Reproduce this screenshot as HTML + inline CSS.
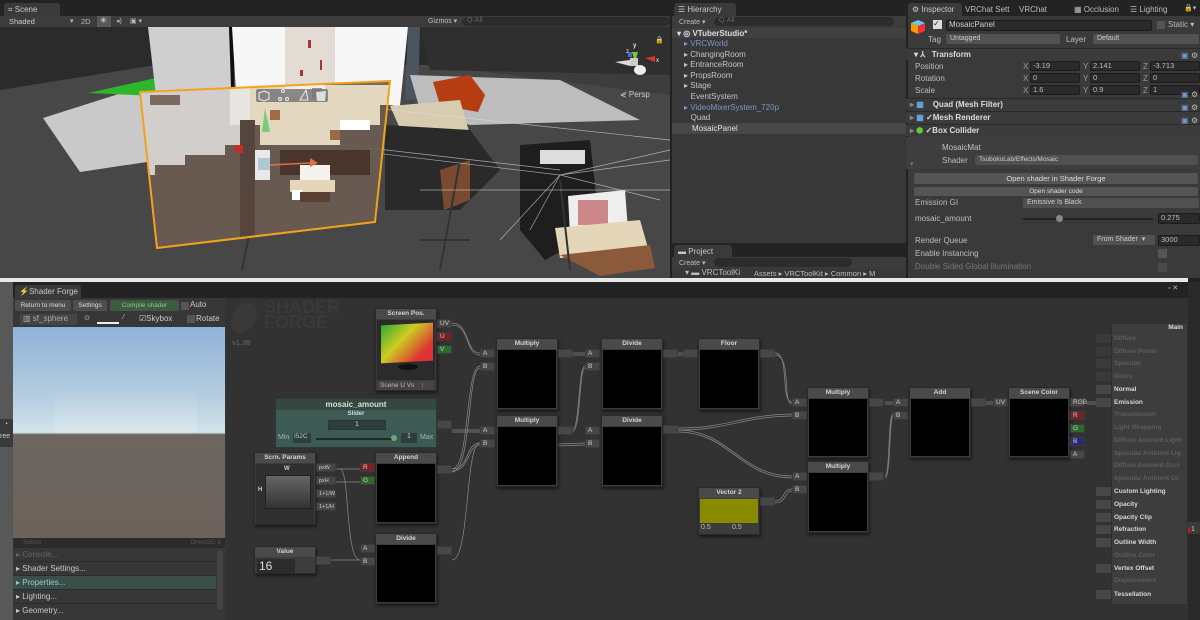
<!DOCTYPE html>
<html><head><meta charset="utf-8">
<style>
*{margin:0;padding:0;box-sizing:border-box}
body{width:1200px;height:620px;overflow:hidden;background:#222;font-family:"Liberation Sans",sans-serif;font-size:8px;color:#bdbdbd;position:relative}
.a{position:absolute;white-space:nowrap}
.tab{position:absolute;background:#3a3a3a;border-radius:3px 3px 0 0;color:#c8c8c8;font-size:8px;padding:2px 4px;height:13px;white-space:nowrap;overflow:hidden}
.fld{position:absolute;background:#2a2a2a;border:1px solid #1c1c1c;border-radius:2px;color:#bbb;font-size:7.5px;padding-left:2px;height:10px;line-height:8px}
.drop{position:absolute;background:#515151;border-radius:2px;color:#ccc;font-size:7px;padding-left:4px;height:10px;line-height:10px}
.btn{position:absolute;background:#555;border-radius:2px;color:#ddd;font-size:7.5px;text-align:center;height:11px;line-height:11px}
.hdr{position:absolute;left:906px;width:294px;height:12px;background:#3b3b3b;border-top:1px solid #2a2a2a;font-weight:bold;color:#ddd;font-size:8px;line-height:11px}
.node{position:absolute;background:#3c3c3c;border:1px solid #2a2a2a;box-shadow:1px 2px 3px rgba(0,0,0,.5)}
.node .h{height:10px;background:#4a4a4a;text-align:center;font-weight:bold;font-size:6.5px;line-height:10px;color:#d4d4d4}
.node .b{background:#000;position:absolute;left:1px;right:1px;bottom:1px}
.p{position:absolute;width:15px;height:9px;background:#474747;border:1px solid #3a3a3a;font-size:6.5px;color:#ccc;line-height:8px;padding-left:2px}
.o{position:absolute;width:15px;height:9px;background:#474747;border:1px solid #3a3a3a}
.ml{position:absolute;left:1114px;font-size:6.5px;font-weight:bold;color:#d8d8d8}
.ml.d{color:#5d5d5d}
.ms{position:absolute;left:1096px;width:15px;height:9px;background:#474747}
</style></head><body>

<!-- ===== SCENE ===== -->
<div class="a" style="left:0;top:0;width:670px;height:27px;background:#232323"></div>
<div class="tab" style="left:4px;top:3px;width:56px;">⌗ Scene</div>
<div class="a" style="left:0;top:16px;width:670px;height:11px;background:#3c3c3c"></div>
<div class="a" style="left:9px;top:17px;color:#ccc;font-size:7.5px">Shaded</div>
<div class="a" style="left:70px;top:17px;font-size:7px">▾</div>
<div class="a" style="left:81px;top:17px;font-size:7.5px">2D</div>
<div class="a" style="left:97px;top:16px;width:14px;height:11px;background:#5a5a5a"></div>
<div class="a" style="left:100px;top:16px;font-size:8px;color:#eee">✳</div>
<div class="a" style="left:116px;top:17px;font-size:7px">◂)</div>
<div class="a" style="left:130px;top:17px;font-size:7px">▣ ▾</div>
<div class="a" style="left:428px;top:17px;font-size:7px">Gizmos ▾</div>
<div class="a" style="left:462px;top:17px;width:208px;height:9px;background:#2c2c2c;border-radius:5px;color:#666;font-size:7px;padding-left:5px">Q·All</div>

<svg class="a" style="left:0;top:27px" width="670" height="251" viewBox="0 27 670 251">
<defs><clipPath id="mz"><polygon points="140,92 390,81 375,222 157,248"/></clipPath></defs>
<rect x="0" y="27" width="670" height="251" fill="#3d3d3d"/>
<polygon points="0,27 670,27 670,65 430,65 0,90" fill="#2b2b2b"/>
<polygon points="0,90 150,66 430,65 670,95 670,278 0,278" fill="#474747"/>
<g stroke="#4f4f4f" stroke-width="0.5">
<line x1="0" y1="130" x2="670" y2="120"/><line x1="0" y1="170" x2="670" y2="160"/><line x1="0" y1="215" x2="670" y2="205"/><line x1="0" y1="105" x2="670" y2="100"/>
<line x1="60" y1="90" x2="0" y2="278"/><line x1="150" y1="80" x2="110" y2="278"/>
</g>
<polygon points="43,118 150,84 160,160 80,172" fill="#c9c9c9"/>
<polygon points="88,93 156,78 156,96" fill="#2db52d"/>
<polygon points="148,27 229,27 232,87 156,96" fill="#cfcfcf"/>
<polygon points="229,27 234,27 234,88 231,88" fill="#111"/>
<polygon points="232,27 408,27 400,106 236,92" fill="#f7f7f7"/>
<rect x="285" y="27" width="50" height="60" fill="#e2dcd4"/>
<g fill="#a33"><rect x="308" y="40" width="3" height="8"/><rect x="320" y="60" width="2" height="10"/><rect x="300" y="70" width="3" height="6"/></g>
<polygon points="408,27 420,27 418,100 405,100" fill="#4a5560"/>
<polygon points="420,27 670,27 670,75 430,70" fill="#2f2f2f"/>
<polygon points="410,75 560,80 640,120 470,125 420,110" fill="#bdbdbd"/>
<polygon points="433,82 470,75 485,95 478,112 440,105" fill="#b63c12"/>
<polygon points="390,106 460,100 470,135 405,140" fill="#d8ccb0"/>
<polygon points="385,125 470,130 500,170 460,210 385,210" fill="#2a2a2a"/>
<polygon points="520,145 590,140 600,230 545,260 520,230" fill="#1e1e1e"/>
<polygon points="568,196 625,190 628,230 570,235" fill="#eee"/>
<rect x="578" y="200" width="30" height="25" fill="#c88"/>
<polygon points="555,228 640,220 648,248 560,258" fill="#e4d6b8"/>
<polygon points="560,255 650,245 655,268 600,276" fill="#8a5a3a"/>
<polygon points="440,170 470,160 470,200 444,210" fill="#7a4a30"/>
<rect x="540" y="150" width="45" height="14" fill="#ddd"/>
<g stroke="#333" stroke-width="2"><line x1="460" y1="160" x2="440" y2="270"/><line x1="420" y1="240" x2="470" y2="240"/><line x1="560" y1="180" x2="570" y2="270"/><line x1="250" y1="230" x2="242" y2="270"/></g>
<g stroke="#ddd" stroke-width="0.7" opacity="0.7">
<line x1="300" y1="100" x2="670" y2="140"/><line x1="300" y1="140" x2="560" y2="170"/><line x1="350" y1="150" x2="560" y2="175"/><line x1="560" y1="175" x2="670" y2="150"/><line x1="560" y1="175" x2="670" y2="160"/><line x1="560" y1="175" x2="660" y2="200"/><line x1="560" y1="175" x2="500" y2="240"/><line x1="560" y1="175" x2="530" y2="230"/><line x1="420" y1="190" x2="670" y2="190"/>
</g>
<g clip-path="url(#mz)">
<rect x="130" y="75" width="270" height="180" fill="#6d5c52" opacity="0.92"/>
<path d="M140 85h100v60h-15v10h-40v10h-30v10h-15z" fill="#d2cecb"/>
<path d="M150 95h30v10h-30z" fill="#7a6a60"/>
<path d="M230 85h20v40h-20z" fill="#e8e4e0"/>
<path d="M250 85h140v20h-10v20h-40v20h-80v-20h-10z" fill="#e4d7bf"/>
<rect x="285" y="85" width="40" height="12" fill="#f3efe8"/>
<rect x="312" y="88" width="10" height="10" fill="#9a8fa8"/>
<rect x="270" y="110" width="10" height="10" fill="#a06a45"/>
<rect x="330" y="130" width="10" height="10" fill="#9a6a45"/>
<rect x="340" y="120" width="30" height="10" fill="#fff"/>
<rect x="280" y="150" width="90" height="25" fill="#4a352c"/>
<rect x="300" y="165" width="30" height="15" fill="#f6f2ee"/>
<rect x="290" y="180" width="45" height="12" fill="#e5d6b8"/>
<rect x="292" y="190" width="10" height="10" fill="#fff"/>
<rect x="300" y="192" width="30" height="10" fill="#5a4033"/>
<rect x="240" y="150" width="30" height="30" fill="#e8e8e8"/>
<rect x="240" y="120" width="15" height="130" fill="#55453d"/>
</g>
<polygon points="140,92 390,81 375,222 157,248" fill="none" stroke="#f3a21b" stroke-width="2"/>
<rect x="235" y="145" width="8" height="8" fill="#c82a2a"/>
<polygon points="265,108 270,132 262,132" fill="#7c7"/>
<line x1="270" y1="165" x2="310" y2="163" stroke="#e07040" stroke-width="1.5"/>
<polygon points="310,158 318,163 310,167" fill="#e07040"/>
<rect x="258" y="158" width="12" height="12" fill="#9bc" opacity="0.7"/>
<rect x="256" y="89" width="72" height="13" rx="2" fill="#777" opacity="0.85"/>
<g fill="none" stroke="#eee" stroke-width="1"><polygon points="264,91 269,93 269,99 264,101 259,99 259,93"/><circle cx="283" cy="91" r="1.5"/><circle cx="280" cy="99" r="1.5"/><circle cx="287" cy="99" r="1.5"/></g>
<polygon points="300,100 306,90 308,100" fill="none" stroke="#eee"/>
<polygon points="316,92 326,91 325,101 317,101" fill="#ddd"/>
<polygon points="632,52 638,52 635,62" fill="#7c3"/><polygon points="645,58 655,56 655,62" fill="#d33"/><polygon points="615,62 630,60 630,66" fill="#ddd"/><rect x="630" y="58" width="8" height="8" fill="#ccc"/><rect x="628" y="52" width="4" height="5" fill="#46c"/>
<ellipse cx="640" cy="70" rx="6" ry="5" fill="#eee"/>
<text x="633" y="47" fill="#eee" font-size="6" font-weight="bold">y</text><text x="626" y="53" fill="#eee" font-size="6">z</text><text x="656" y="62" fill="#eee" font-size="6">x</text>
<text x="620" y="97" fill="#ccc" font-size="8">⋞ Persp</text>
<text x="655" y="42" fill="#aaa" font-size="7">🔒</text>
</svg>
<div class="a" style="left:0;top:278px;width:1188px;height:4px;background:#e8e8e8"></div>

<!-- ===== HIERARCHY ===== -->
<div class="a" style="left:670px;top:0;width:236px;height:278px;background:#383838;border-left:2px solid #222"></div>
<div class="a" style="left:672px;top:0;width:234px;height:16px;background:#232323"></div>
<div class="tab" style="left:674px;top:3px;width:62px;">☰ Hierarchy</div>
<div class="a" style="left:672px;top:16px;width:234px;height:11px;background:#3c3c3c"></div>
<div class="a" style="left:679px;top:18px;font-size:7px">Create ▾</div>
<div class="a" style="left:714px;top:17px;width:180px;height:9px;background:#2c2c2c;border-radius:5px;color:#666;font-size:7px;padding-left:5px">Q·All</div>
<div class="a" style="left:672px;top:28px;width:234px;height:10px;background:#414141"></div>
<div class="a" style="left:677px;top:29px;font-size:8px;font-weight:bold;color:#ddd">▾ ◎ VTuberStudio*</div>
<div class="a" style="left:684px;top:39px;font-size:8px;line-height:10.6px;color:#c4c4c4">
<span style="color:#7f97c9">▸ VRCWorld</span><br>▸ ChangingRoom<br>▸ EntranceRoom<br>▸ PropsRoom<br>▸ Stage<br>&nbsp;&nbsp;&nbsp;EventSystem<br><span style="color:#7f97c9">▸ VideoMixerSystem_720p</span><br>&nbsp;&nbsp;&nbsp;Quad</div>
<div class="a" style="left:672px;top:123px;width:234px;height:11px;background:#474747"></div>
<div class="a" style="left:692px;top:124px;font-size:8px;color:#e0e0e0">MosaicPanel</div>
<div class="a" style="left:672px;top:243px;width:234px;height:14px;background:#232323"></div>
<div class="tab" style="left:674px;top:245px;width:58px;">▬ Project</div>
<div class="a" style="left:672px;top:257px;width:234px;height:11px;background:#3c3c3c"></div>
<div class="a" style="left:679px;top:259px;font-size:7px">Create ▾</div>
<div class="a" style="left:714px;top:258px;width:138px;height:9px;background:#2c2c2c;border-radius:5px"></div>
<div class="a" style="left:685px;top:268px;font-size:8px">▾ ▬ VRCToolKi</div>
<div class="a" style="left:754px;top:269px;font-size:7.5px">Assets ▸ VRCToolKit ▸ Common ▸ M</div>

<!-- ===== INSPECTOR ===== -->
<div class="a" style="left:906px;top:0;width:294px;height:278px;background:#3a3a3a;border-left:2px solid #222"></div>
<div class="a" style="left:906px;top:0;width:294px;height:16px;background:#232323"></div>
<div class="tab" style="left:908px;top:3px;width:54px;background:#3a3a3a">⚙ Inspector</div>
<div class="a" style="left:965px;top:5px;font-size:8px">VRChat Sett</div>
<div class="a" style="left:1019px;top:5px;font-size:8px">VRChat</div>
<div class="a" style="left:1074px;top:5px;font-size:8px">▦ Occlusion</div>
<div class="a" style="left:1130px;top:5px;font-size:8px">☰ Lighting</div>
<div class="a" style="left:1184px;top:4px;font-size:7px">🔒▾</div>
<svg class="a" style="left:909px;top:18px" width="18" height="18"><polygon points="2,5 9,2 16,5 9,8" fill="#6ce"/><polygon points="2,5 9,8 9,16 2,13" fill="#f90"/><polygon points="16,5 9,8 9,16 16,13" fill="#e33"/></svg>
<div class="a" style="left:933px;top:20px;width:9px;height:9px;background:#ddd;color:#222;font-size:8px;line-height:8px">✓</div>
<div class="fld" style="left:946px;top:20px;width:206px;height:11px;color:#ccc;font-size:8px">MosaicPanel</div>
<div class="a" style="left:1157px;top:21px;width:8px;height:8px;background:#555"></div>
<div class="a" style="left:1168px;top:20px;font-size:8px">Static ▾</div>
<div class="a" style="left:928px;top:35px;font-size:8px">Tag</div>
<div class="drop" style="left:946px;top:34px;width:114px">Untagged</div>
<div class="a" style="left:1066px;top:35px;font-size:8px">Layer</div>
<div class="drop" style="left:1093px;top:34px;width:106px">Default</div>
<div class="hdr" style="top:48px;padding-left:8px">▾ ⅄ &nbsp;&nbsp;Transform</div>
<div class="a" style="left:915px;top:61px;font-size:8px;line-height:12px">Position<br>Rotation<br>Scale</div>
<div class="a" style="left:1023px;top:61px;font-size:8px;line-height:12px;color:#999">X<br>X<br>X</div>
<div class="a" style="left:1083px;top:61px;font-size:8px;line-height:12px;color:#999">Y<br>Y<br>Y</div>
<div class="a" style="left:1143px;top:61px;font-size:8px;line-height:12px;color:#999">Z<br>Z<br>Z</div>
<div class="fld" style="left:1030px;top:61px;width:50px">-3.19</div><div class="fld" style="left:1090px;top:61px;width:50px">2.141</div><div class="fld" style="left:1150px;top:61px;width:50px">-3.713</div>
<div class="fld" style="left:1030px;top:73px;width:50px">0</div><div class="fld" style="left:1090px;top:73px;width:50px">0</div><div class="fld" style="left:1150px;top:73px;width:50px">0</div>
<div class="fld" style="left:1030px;top:85px;width:50px">1.6</div><div class="fld" style="left:1090px;top:85px;width:50px">0.9</div><div class="fld" style="left:1150px;top:85px;width:50px">1</div>
<div class="hdr" style="top:98px;padding-left:4px"><span style="color:#888">▸</span> <span style="color:#6ad">▦</span> &nbsp;&nbsp;&nbsp;Quad (Mesh Filter)</div>
<div class="hdr" style="top:111px;padding-left:4px"><span style="color:#888">▸</span> <span style="color:#6ad">▦</span> ✓Mesh Renderer</div>
<div class="hdr" style="top:124px;padding-left:4px"><span style="color:#888">▸</span> <span style="color:#6c3">⬢</span> ✓Box Collider</div>
<div class="a" style="left:1181px;top:49px;font-size:8px;color:#79c;line-height:13px">▣<br><br><br>▣<br>▣<br>▣<br><br>▣</div>
<div class="a" style="left:1191px;top:49px;font-size:8px;color:#bbb;line-height:13px">⚙<br><br><br>⚙<br>⚙<br>⚙<br><br>⚙</div>
<div class="a" style="left:906px;top:137px;width:294px;height:32px;background:#3e3e3e"></div>
<div class="a" style="left:942px;top:143px;font-size:8px;color:#c4c4c4">MosaicMat</div>
<div class="a" style="left:942px;top:156px;font-size:8px">Shader</div>
<div class="a" style="left:910px;top:160px;font-size:7px;color:#777">▾</div>
<div class="drop" style="left:975px;top:155px;width:223px;font-size:6.5px">TsubokuLab/Effects/Mosaic</div>
<div class="btn" style="left:914px;top:173px;width:284px;">Open shader in Shader Forge</div>
<div class="btn" style="left:914px;top:187px;width:284px;height:9px;line-height:9px;font-size:6.5px">Open shader code</div>
<div class="a" style="left:915px;top:198px;font-size:8px">Emission GI</div>
<div class="drop" style="left:1023px;top:198px;width:176px">Emissive Is Black</div>
<div class="a" style="left:915px;top:214px;font-size:8px">mosaic_amount</div>
<div class="a" style="left:1023px;top:218px;width:130px;height:2px;background:#222"></div>
<div class="a" style="left:1056px;top:215px;width:7px;height:7px;border-radius:4px;background:#888"></div>
<div class="fld" style="left:1158px;top:213px;width:42px;height:11px">0.275</div>
<div class="a" style="left:915px;top:236px;font-size:8px">Render Queue</div>
<div class="drop" style="left:1093px;top:235px;width:62px">From Shader &nbsp;▾</div>
<div class="fld" style="left:1158px;top:235px;width:42px;height:11px">3000</div>
<div class="a" style="left:915px;top:249px;font-size:8px">Enable Instancing</div>
<div class="a" style="left:1158px;top:249px;width:9px;height:9px;background:#555"></div>
<div class="a" style="left:915px;top:262px;font-size:8px;color:#777">Double Sided Global Illumination</div>
<div class="a" style="left:1158px;top:263px;width:9px;height:9px;background:#4a4a4a"></div>

<!-- ===== SHADER FORGE ===== -->
<div class="a" style="left:0;top:282px;width:13px;height:338px;background:#585858"></div>
<div class="a" style="left:0;top:419px;width:13px;height:28px;background:#3a3a3a;color:#ccc;font-size:7px;line-height:12px">&nbsp;&nbsp;◔<br>ree</div>
<div class="a" style="left:1188px;top:282px;width:12px;height:338px;background:#2a2a2a"></div>
<div class="a" style="left:1188px;top:522px;width:12px;height:12px;background:#3a3a3a"></div>
<div class="a" style="left:1185px;top:527px;width:5px;height:7px;background:#d11;border-radius:3px"></div>
<div class="a" style="left:1191px;top:526px;font-size:7px;color:#ccc">1</div>
<div class="a" style="left:13px;top:282px;width:1175px;height:338px;background:#323232"></div>
<div class="a" style="left:13px;top:282px;width:1175px;height:16px;background:#232323"></div>
<div class="tab" style="left:15px;top:285px;width:66px;background:#3a3a3a">⚡Shader Forge</div>
<div class="a" style="left:1168px;top:284px;font-size:7px;color:#bbb">▫ ✕</div>
<div class="a" style="left:13px;top:298px;width:213px;height:322px;background:#373737"></div>
<div class="btn" style="left:15px;top:300px;width:56px;height:11px;font-size:6.5px;background:#4e4e4e">Return to menu</div>
<div class="btn" style="left:73px;top:300px;width:34px;height:11px;font-size:6.5px;background:#4e4e4e">Settings</div>
<div class="btn" style="left:110px;top:300px;width:69px;height:11px;font-size:6.5px;background:#3f5a3f;color:#8c8">Compile shader</div>
<div class="a" style="left:181px;top:302px;width:8px;height:8px;background:#555"></div>
<div class="a" style="left:190px;top:300px;font-size:8px;color:#ccc">Auto</div>
<div class="a" style="left:20px;top:314px;width:57px;height:11px;background:#454545;color:#aaa;font-size:8px;padding-left:3px">▥ sf_sphere</div>
<div class="a" style="left:84px;top:314px;font-size:7px">⊙</div>
<div class="a" style="left:97px;top:322px;width:22px;height:2px;background:#eee"></div>
<div class="a" style="left:123px;top:314px;font-size:7px;color:#ccc">⁄</div>
<div class="a" style="left:139px;top:314px;font-size:8px;color:#ccc">☑Skybox</div>
<div class="a" style="left:187px;top:315px;width:8px;height:8px;background:#555"></div>
<div class="a" style="left:196px;top:314px;font-size:8px;color:#ccc">Rotate</div>
<div class="a" style="left:13px;top:327px;width:212px;height:211px;background:linear-gradient(#8fb2d7 0%,#b7cfe0 35%,#d4e4ea 50%,#6d655f 51%,#6b625c 100%)"></div>
<div class="a" style="left:55px;top:392px;width:142px;height:41px;background:linear-gradient(rgba(255,255,255,.05),rgba(255,255,255,.18))"></div>
<div class="a" style="left:13px;top:538px;width:212px;height:10px;background:#2b2b2b;color:#555;font-size:6.5px;line-height:10px;padding-left:10px">Select<span style="position:absolute;right:4px">Direct3D 9</span></div>
<div class="a" style="left:13px;top:548px;width:203px;height:72px;font-size:8px;line-height:14px;color:#c8c8c8">
<div style="height:14px;border-bottom:1px solid #2b2b2b;color:#666;padding-left:3px">▸ Console...</div>
<div style="height:14px;border-bottom:1px solid #2b2b2b;padding-left:3px">▸ Shader Settings...</div>
<div style="height:14px;border-bottom:1px solid #2b2b2b;background:#3b4f4a;color:#9cc;padding-left:3px">▸ Properties...</div>
<div style="height:14px;border-bottom:1px solid #2b2b2b;padding-left:3px">▸ Lighting...</div>
<div style="height:14px;padding-left:3px">▸ Geometry...</div></div>
<div class="a" style="left:217px;top:550px;width:6px;height:60px;background:#444;border-radius:3px"></div>

<div class="a" style="left:232px;top:303px;width:24px;height:30px;background:#393939;border-radius:12px;transform:skew(-15deg)"></div>
<div class="a" style="left:264px;top:300px;font-size:18px;font-weight:bold;color:#393939;line-height:15px">SHADER<br>FORGE</div>
<div class="a" style="left:232px;top:338px;font-size:7.5px;color:#6a6a6a">v1.38</div>

<svg class="a" style="left:0;top:0" width="1200" height="620">
<g fill="none" stroke="#8a8a8a" stroke-width="0.7">
<path d="M452 323 C470 323 465 353 480 353"/><path d="M452 325 C470 325 465 355 480 355"/>
<path d="M316 469 C340 469 340 469 360 469"/><path d="M316 482 C345 482 345 482 360 482"/>
<path d="M340 469 C350 469 345 560 360 560"/><path d="M316 560 C335 560 340 560 360 560"/>
<path d="M452 469 C470 469 465 366 480 366"/><path d="M452 472 C472 472 467 368 480 368"/>
<path d="M452 430 C470 430 465 430 480 430"/><path d="M452 432 C470 432 465 432 480 432"/>
<path d="M452 469 C470 469 465 443 480 443"/><path d="M452 471 C470 471 467 445 480 445"/>
<path d="M452 560 C470 560 465 443 480 443"/>
<path d="M572 353 L585 353"/><path d="M572 355 L585 355"/>
<path d="M572 430 C580 430 578 366 585 366"/><path d="M572 432 C581 432 579 368 585 368"/>
<path d="M558 444 L585 443"/><path d="M558 446 L585 445"/>
<path d="M677 353 L683 353"/><path d="M677 355 L683 355"/>
<path d="M775 353 C790 353 780 402 792 402"/><path d="M775 355 C792 355 782 404 792 404"/>
<path d="M677 428 C730 428 740 415 792 414"/><path d="M677 430 C730 430 740 417 792 416"/>
<path d="M677 430 C730 430 740 476 792 476"/><path d="M677 432 C730 432 740 478 792 478"/>
<path d="M775 501 C785 501 782 489 792 489"/><path d="M775 503 C787 503 784 491 792 491"/>
<path d="M885 402 L893 402"/><path d="M885 404 L893 404"/>
<path d="M885 476 C890 476 888 414 893 414"/><path d="M885 478 C891 478 889 416 893 416"/>
<path d="M986 402 L993 402"/><path d="M986 404 L993 404"/>
<path d="M1087 402 L1096 402"/><path d="M1087 404 L1096 404"/>
</g></svg>

<div class="node" style="left:375px;top:308px;width:62px;height:83px"><div class="h">Screen Pos.</div>
<div class="a" style="left:1px;top:11px;width:58px;height:60px;background:#2b2b2b"></div>
<div class="a" style="left:5px;top:15px;width:52px;height:38px;background:linear-gradient(135deg,#3a3 0%,#cc2 40%,#d33 80%);transform:skewY(-3deg)"></div>
<div class="a" style="left:22px;top:55px;width:20px;height:6px;background:#111;border-radius:50%"></div>
<div class="a" style="left:2px;top:72px;width:56px;height:9px;background:#444;font-size:6.5px;color:#bbb;padding-left:2px">Scene U Vs &nbsp;&nbsp;&nbsp;⁝</div></div>
<div class="p" style="left:437px;top:319px">UV</div>
<div class="p" style="left:437px;top:332px;background:#7a2222">U</div>
<div class="p" style="left:437px;top:345px;background:#2a6a2a">V</div>

<div class="a" style="left:275px;top:398px;width:162px;height:50px;background:#3d5a53;border:1px solid #2a3a36">
<div style="height:11px;background:#34483f;text-align:center;font-weight:bold;font-size:8px;color:#ddd;line-height:11px">mosaic_amount</div>
<div style="text-align:center;font-size:6px;font-weight:bold;color:#cde;margin-top:1px">Slider</div>
<div class="a" style="left:52px;top:21px;width:58px;height:10px;background:#2e3f3b;border:1px solid #283531;text-align:center;font-size:7px;color:#ccc">1</div>
<div class="a" style="left:2px;top:35px;font-size:7px;color:#9bb">Min</div>
<div class="a" style="left:17px;top:34px;width:18px;height:10px;background:#2e3f3b;font-size:6.5px;color:#bcc;padding-left:1px">I52C</div>
<div class="a" style="left:40px;top:39px;width:78px;height:2px;background:#1d2a27"></div>
<div class="a" style="left:115px;top:36px;width:6px;height:6px;border-radius:3px;background:#6a7"></div>
<div class="a" style="left:125px;top:34px;width:16px;height:10px;background:#2e3f3b;font-size:7px;color:#ccc;text-align:center">1</div>
<div class="a" style="left:144px;top:35px;font-size:7px;color:#9bb">Max</div></div>
<div class="o" style="left:437px;top:420px"></div>

<div class="node" style="left:254px;top:452px;width:62px;height:73px"><div class="h">Scrn. Params</div>
<div class="a" style="left:1px;top:11px;width:58px;height:60px;background:#2f2f2f"></div>
<div class="a" style="left:10px;top:22px;width:46px;height:34px;background:linear-gradient(#666,#333);border:1px solid #222"></div>
<div class="a" style="left:29px;top:13px;font-size:6px;font-weight:bold;color:#ccc">W</div>
<div class="a" style="left:3px;top:34px;font-size:6px;font-weight:bold;color:#ccc">H</div></div>
<div class="p" style="left:316px;top:463px;width:20px;font-size:5.5px">pxW</div>
<div class="p" style="left:316px;top:476px;width:20px;font-size:5.5px">pxH</div>
<div class="p" style="left:316px;top:489px;width:20px;font-size:5.5px">1+1/W</div>
<div class="p" style="left:316px;top:502px;width:20px;font-size:5.5px">1+1/H</div>

<div class="node" style="left:254px;top:546px;width:62px;height:28px"><div class="h">Value</div>
<div class="a" style="left:2px;top:12px;width:38px;height:14px;background:#2b2b2b;font-size:12px;color:#ddd;line-height:14px;padding-left:2px">16</div></div>
<div class="o" style="left:316px;top:556px"></div>

<div class="node" style="left:375px;top:452px;width:62px;height:72px"><div class="h">Append</div><div class="b" style="top:11px"></div></div>
<div class="p" style="left:360px;top:463px;background:#7a2222">R</div>
<div class="p" style="left:360px;top:476px;background:#2a6a2a">G</div>
<div class="o" style="left:437px;top:465px"></div>

<div class="node" style="left:375px;top:533px;width:62px;height:71px"><div class="h">Divide</div><div class="b" style="top:11px"></div></div>
<div class="p" style="left:360px;top:544px">A</div><div class="p" style="left:360px;top:557px">B</div>
<div class="o" style="left:437px;top:546px"></div>

<div class="node" style="left:496px;top:338px;width:62px;height:72px"><div class="h">Multiply</div><div class="b" style="top:11px"></div></div>
<div class="p" style="left:480px;top:349px">A</div><div class="p" style="left:480px;top:362px">B</div><div class="o" style="left:558px;top:349px"></div>

<div class="node" style="left:496px;top:415px;width:62px;height:72px"><div class="h">Multiply</div><div class="b" style="top:11px"></div></div>
<div class="p" style="left:480px;top:426px">A</div><div class="p" style="left:480px;top:439px">B</div><div class="o" style="left:558px;top:426px"></div>

<div class="node" style="left:601px;top:338px;width:62px;height:72px"><div class="h">Divide</div><div class="b" style="top:11px"></div></div>
<div class="p" style="left:585px;top:349px">A</div><div class="p" style="left:585px;top:362px">B</div><div class="o" style="left:663px;top:349px"></div>

<div class="node" style="left:601px;top:415px;width:62px;height:72px"><div class="h">Divide</div><div class="b" style="top:11px"></div></div>
<div class="p" style="left:585px;top:426px">A</div><div class="p" style="left:585px;top:439px">B</div><div class="o" style="left:663px;top:425px"></div>

<div class="node" style="left:698px;top:338px;width:62px;height:72px"><div class="h">Floor</div><div class="b" style="top:11px"></div></div>
<div class="o" style="left:683px;top:349px"></div><div class="o" style="left:760px;top:349px"></div>

<div class="node" style="left:698px;top:487px;width:62px;height:48px"><div class="h">Vector 2</div>
<div class="a" style="left:1px;top:11px;width:58px;height:24px;background:#8a8a00"></div>
<div class="a" style="left:2px;top:36px;font-size:7px;color:#bbb">0.5</div><div class="a" style="left:33px;top:36px;font-size:7px;color:#bbb">0.5</div></div>
<div class="o" style="left:760px;top:497px"></div>

<div class="node" style="left:807px;top:387px;width:62px;height:71px"><div class="h">Multiply</div><div class="b" style="top:11px"></div></div>
<div class="p" style="left:792px;top:398px">A</div><div class="p" style="left:792px;top:411px">B</div><div class="o" style="left:869px;top:398px"></div>

<div class="node" style="left:807px;top:461px;width:62px;height:72px"><div class="h">Multiply</div><div class="b" style="top:11px"></div></div>
<div class="p" style="left:792px;top:472px">A</div><div class="p" style="left:792px;top:485px">B</div><div class="o" style="left:869px;top:472px"></div>

<div class="node" style="left:909px;top:387px;width:62px;height:71px"><div class="h">Add</div><div class="b" style="top:11px"></div></div>
<div class="p" style="left:893px;top:398px">A</div><div class="p" style="left:893px;top:411px">B</div><div class="o" style="left:971px;top:398px"></div>
<div class="p" style="left:993px;top:398px">UV</div>

<div class="node" style="left:1008px;top:387px;width:62px;height:71px"><div class="h">Scene Color</div><div class="b" style="top:11px"></div></div>
<div class="p" style="left:1070px;top:398px">RGB</div>
<div class="p" style="left:1070px;top:411px;background:#7a2222">R</div>
<div class="p" style="left:1070px;top:424px;background:#2a6a2a">G</div>
<div class="p" style="left:1070px;top:437px;background:#2a2a7a">B</div>
<div class="p" style="left:1070px;top:450px">A</div>

<div class="a" style="left:1111px;top:323px;width:77px;height:282px;background:#3d3d3d;border:1px solid #2e2e2e"></div>
<div class="a" style="left:1111px;top:324px;width:77px;height:10px;text-align:right;padding-right:5px;font-size:6.5px;font-weight:bold;color:#ddd">Main</div>
<div class="ms" style="top:334px;background:#3a3a3a"></div><div class="ml d" style="top:335px">Diffuse</div>
<div class="ms" style="top:347px;background:#3a3a3a"></div><div class="ml d" style="top:348px">Diffuse Power</div>
<div class="ms" style="top:359px;background:#3a3a3a"></div><div class="ml d" style="top:360px">Specular</div>
<div class="ms" style="top:372px;background:#3a3a3a"></div><div class="ml d" style="top:373px">Gloss</div>
<div class="ms" style="top:385px"></div><div class="ml" style="top:386px">Normal</div>
<div class="ms" style="top:398px"></div><div class="ml" style="top:399px">Emission</div>
<div class="ml d" style="top:411px">Transmission</div>
<div class="ml d" style="top:424px">Light Wrapping</div>
<div class="ml d" style="top:437px">Diffuse Ambient Light</div>
<div class="ml d" style="top:450px">Specular Ambient Lig</div>
<div class="ml d" style="top:462px">Diffuse Ambient Occl</div>
<div class="ml d" style="top:475px">Specular Ambient Oc</div>
<div class="ms" style="top:487px"></div><div class="ml" style="top:488px">Custom Lighting</div>
<div class="ms" style="top:500px"></div><div class="ml" style="top:501px">Opacity</div>
<div class="ms" style="top:513px"></div><div class="ml" style="top:514px">Opacity Clip</div>
<div class="ms" style="top:525px"></div><div class="ml" style="top:526px">Refraction</div>
<div class="ms" style="top:538px"></div><div class="ml" style="top:539px">Outline Width</div>
<div class="ml d" style="top:552px">Outline Color</div>
<div class="ms" style="top:564px"></div><div class="ml" style="top:565px">Vertex Offset</div>
<div class="ml d" style="top:577px">Displacement</div>
<div class="ms" style="top:590px"></div><div class="ml" style="top:591px">Tessellation</div>
</body></html>
